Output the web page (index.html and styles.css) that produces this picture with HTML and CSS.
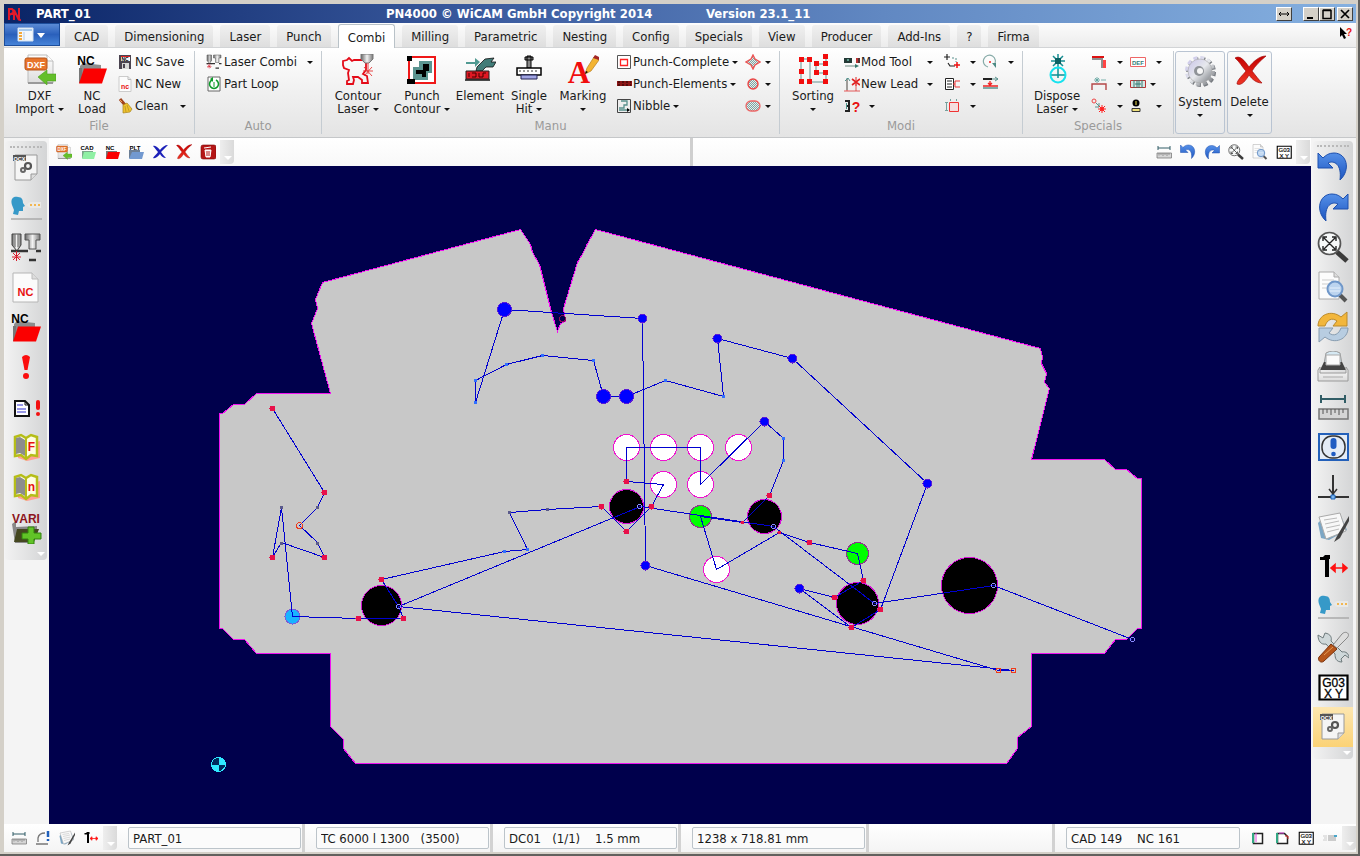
FILE: index.html
```html
<!DOCTYPE html>
<html lang="en">
<head>
<meta charset="utf-8">
<title>PN4000 - PART_01</title>
<link rel="stylesheet" href="styles.css">
</head>
<body>
<svg class="paints" aria-hidden="true">
  <defs>
    <linearGradient id="gBlue" x1="0" y1="0" x2="0" y2="1"><stop offset="0" stop-color="#5590e8"/><stop offset="1" stop-color="#1d55c0"/></linearGradient>
    <linearGradient id="gPage" x1="0" y1="0" x2="0" y2="1"><stop offset="0" stop-color="#ffffff"/><stop offset="1" stop-color="#dcdcdc"/></linearGradient>
    <linearGradient id="gSteel" x1="0" y1="0" x2="1" y2="0"><stop offset="0" stop-color="#666"/><stop offset=".5" stop-color="#f2f2f2"/><stop offset="1" stop-color="#777"/></linearGradient>
    <linearGradient id="gGear" x1="0" y1="0" x2="1" y2="1"><stop offset="0" stop-color="#c9c4ea"/><stop offset=".5" stop-color="#e6e8ec"/><stop offset="1" stop-color="#75797e"/></linearGradient>
    <linearGradient id="gRed" x1="0" y1="0" x2="0" y2="1"><stop offset="0" stop-color="#c40000"/><stop offset="1" stop-color="#ee3524"/></linearGradient>
    <pattern id="pHatch" width="2" height="2" patternUnits="userSpaceOnUse"><rect width="2" height="2" fill="#e4eeee"/><path d="M0 0h1v1h-1zM1 1h1v1h-1z" fill="#7fa3a0"/></pattern>
  </defs>
</svg>
<svg class="sprite" aria-hidden="true">
  <symbol id="dxf" viewBox="0 0 32 32"><path d="M4 1h19l6 6v22H4z" fill="url(#gPage)" stroke="#bbb"/><path d="M23 1v6h6" fill="#fff" stroke="#bbb"/><path d="M4 29h25" stroke="#999" stroke-width="2"/><rect x="1" y="4" width="22" height="12" rx="2" fill="#e8752c" stroke="#b5541a"/><text x="12" y="13.500" class="ic-t ic-white" font-size="9">DXF</text><path d="M14 23l9-7v4h9v7h-9v4z" fill="#64bf2a" stroke="#4a9e1c" stroke-width=".6"/></symbol>
  <symbol id="ncfolder" viewBox="0 0 32 32"><path d="M4 12l3-3 18 2v10H4z" fill="#8d8d8d"/><path d="M3 14h3v15H3z" fill="#777"/><path d="M8 14.500h23l-5 15H3z" fill="#fb0000"/><text x="10" y="11" class="ic-t" font-size="12">NC</text></symbol>
  <symbol id="cadfolder" viewBox="0 0 16 16"><path d="M2 7h11v7H2z" fill="#7aa98a"/><path d="M4 8h12l-2 7H2z" fill="#8ff0a4"/><text x="7" y="6" class="ic-t" font-size="6">CAD</text></symbol>
  <symbol id="pltfolder" viewBox="0 0 16 16"><path d="M1 6h11v8H1z" fill="#6c7e94"/><path d="M4 8h12l-2 7H1z" fill="#7299d0"/><text x="7" y="6" class="ic-t" font-size="6">PLT</text></symbol>
  <symbol id="ncfolder16" viewBox="0 0 16 16"><path d="M2 7h11v7H2z" fill="#777"/><path d="M4 8h12l-2 7H2z" fill="#fb0000"/><text x="6" y="6" class="ic-t" font-size="6">NC</text></symbol>
  <symbol id="save" viewBox="0 0 16 16"><path d="M2 1h12v14H2z" fill="#4b4450"/><path d="M4 2h9v5H4z" fill="#fff"/><path d="M5 9h7v6H5z" fill="#d8d8d8"/><path d="M6 10h2v4H6z" fill="#4b4450"/><path d="M4 2h9v1H4z" fill="#d22"/><text x="8" y="7" class="ic-t" font-size="5">NC</text></symbol>
  <symbol id="ncnew" viewBox="0 0 16 16"><path d="M2 .500h9l3 3v12H2z" fill="#fcfcfc" stroke="#ccc"/><path d="M11 .500v3h3" fill="none" stroke="#bbb"/><text x="8" y="13" class="ic-t ic-red" font-size="7">nc</text></symbol>
  <symbol id="broom" viewBox="0 0 16 16"><path d="M3 1l5 6" stroke="#a0431c" stroke-width="3"/><path d="M3 2l2 2" stroke="#f3a35a"/><path d="M6 7l4-2 5 6-2 3-7 1z" fill="#eec22e" stroke="#a7831a" stroke-width=".7"/><path d="M8 8l1 6M10 7l2 6" stroke="#a7831a" stroke-width=".6"/></symbol>
  <symbol id="heads" viewBox="0 0 32 32"><path d="M2 2h9v11l-4 6-5-6z" fill="url(#gSteel)" stroke="#444"/><path d="M5 2v13M8 2v13" stroke="#777"/><path d="M15 2h15v6h-4v9h-7V8h-4z" fill="url(#gSteel)" stroke="#555"/><path d="M1 19h17M26 19h5M19 28h7" stroke="#333" stroke-width="2.500"/><path d="M3 21l7 7M10 21l-7 7M6.500 19v10M2 25h9" stroke="#d81c2c"/></symbol>
  <symbol id="loop" viewBox="0 0 16 16"><path d="M2 1h12v14H2z" fill="#fff" stroke="#666"/><path d="M6 4a4.500 4.500 0 1 0 4 0" fill="none" stroke="#0b9a28" stroke-width="1.600"/><path d="M7 1v5L4 3z" fill="#0b9a28"/><path d="M8 6v5" stroke="#0b9a28"/></symbol>
  <symbol id="contour" viewBox="0 0 32 32"><path d="M1 7l4-1 2-2 3 3 2-1h9l3 3v7l-3 4 4 2 1 7h-6v-3l-4-3H11l1 3-1 4H5v-3l2-1-1-7 1-3-5-2-1-3z" fill="none" stroke="#e40b18" stroke-width="1.800"/><path d="M19 0h12v5l-4 4h-4l-4-4z" fill="url(#gSteel)" stroke="#777"/><path d="M26 9v11M22 13l8 9M30 13l-8 9M21 17h10" stroke="#e43434" stroke-width=".9"/></symbol>
  <symbol id="punchcontour" viewBox="0 0 32 32"><path d="M3 3h26v26H3z" fill="#fff" stroke="#ef1818" stroke-width="2"/><path d="M13 7h13v12h-4v7H7V13h6z" fill="#5b9591"/><path d="M17 10h6v7h-3v6h-4v-3h-6v-4h7z" fill="#000"/><path d="M1 2h5v5H1zM1 25h8v5H1z"/></symbol>
  <symbol id="element" viewBox="0 0 32 32"><path d="M2 8h9V4l5 4-5 5v-3H2z" fill="#519a92"/><path d="M13 13l8-8 9-1-3 4h5l-3 5h-7l-4 4h-6z" fill="#417c78" stroke="#111" stroke-width=".8"/><path d="M2 17h23v8H2z" fill="#e01823" stroke="#222"/><path d="M5 19v4M8 19h4v4H8M15 19v4h4M22 19h-3v4" fill="none" stroke="#400"/><path d="M1 26h25" stroke="#111" stroke-width="1.500"/></symbol>
  <symbol id="single" viewBox="0 0 32 32"><path d="M14 2h4v12h-4zM12 3h8v3h-8z" fill="#888" stroke="#000"/><path d="M4 14h24v7H4z" fill="#fff" stroke="#000" stroke-width="1.500"/><path d="M6 17h20" stroke="#333" stroke-dasharray="2 2"/><path d="M8 21h16v4H8z" fill="#a1a5e3" stroke="#222255"/></symbol>
  <symbol id="marking" viewBox="0 0 32 32"><text x="12" y="29" font-family="Liberation Serif, serif" font-size="31" font-weight="700" fill="#f10d0d" text-anchor="middle">A</text><path d="M18 20l2-6 7-11 5 3-8 11z" fill="#f3b432" stroke="#b87d20" stroke-width=".7"/><path d="M26 4l2-3 4 2v3z" fill="#a32626"/><path d="M18 20l1-3 2 1z"/></symbol>
  <symbol id="pcomplete" viewBox="0 0 16 16"><path d="M1.500 1.500h13v13h-13z" fill="#fff" stroke="#555"/><path d="M4.500 5.500h7v6h-7z" fill="#fff" stroke="#f22" stroke-width="1.300"/></symbol>
  <symbol id="pelements" viewBox="0 0 16 16"><path d="M1 5h15v5H1z" fill="#8a1515"/><path d="M2 6h13M2 9h13" stroke="#200" stroke-dasharray="2 2"/></symbol>
  <symbol id="nibble" viewBox="0 0 16 16"><path d="M1.500 1.500h13v13h-13z" fill="#eee" stroke="#444"/><path d="M5 3h6v4H8v3H3M3 12h10" fill="none" stroke="#58908c" stroke-width="1.300"/><path d="M11 10l3 2-3 2z"/></symbol>
  <symbol id="diamond" viewBox="0 0 16 16"><path d="M8 1l2 4 5 3-5 3-2 4-2-4-5-3 5-3z" fill="url(#pHatch)" stroke="#ed5555" stroke-width="1.400"/></symbol>
  <symbol id="circ" viewBox="0 0 16 16"><circle cx="8" cy="8" r="5" fill="url(#pHatch)" stroke="#ed4444" stroke-width="1.400"/></symbol>
  <symbol id="oval" viewBox="0 0 16 16"><rect x="1" y="3" width="14" height="10" rx="5" fill="url(#pHatch)" stroke="#ed6666" stroke-width="1.300"/></symbol>
  <symbol id="sorting" viewBox="0 0 32 32"><path d="M4 28V5h9v23M19 19V10h10V2M19 19h10v9H13" fill="none" stroke="#66918f"/><path d="M2 3h5v5H2zM10 3h5v5h-5zM2 15h5v5H2zM2 25h5v5H2zM10 25h5v5h-5zM26 0h5v5h-5zM26 7h5v5h-5zM17 7h5v5h-5zM17 16h5v5h-5zM26 16h5v5h-5zM26 25h5v5h-5z" fill="#f20d0d"/></symbol>
  <symbol id="modtool" viewBox="0 0 16 16"><path d="M0 4h8v5H0z" fill="#243a36"/><path d="M3 5h2v2H3z" fill="#5e9d8d"/><path d="M12 4h2v5h-2z" fill="#b33"/><path d="M14 4h2v5h-2z" fill="#533"/><path d="M1 12h11" stroke="#6d8b82"/><path d="M11 10l4 2-4 2z" fill="#38786c"/></symbol>
  <symbol id="newlead" viewBox="0 0 16 16"><path d="M0 15h16M3 3v12M12 5v10" stroke="#d33" stroke-width=".8"/><path d="M1 5l3-3 2 3M3 2v12" stroke="#53928c" fill="none"/><path d="M8 3l8 6M16 3l-8 6" stroke="#e12222" stroke-width="1.600"/><path d="M12 1v9" stroke="#e12222"/></symbol>
  <symbol id="helpbr" viewBox="0 0 16 16"><path d="M1 3h4v10H1M2 8h3" fill="none" stroke="#222" stroke-width="2"/><path d="M2 5h1v6H2z" fill="#4b938a"/><text x="12" y="14" class="ic-t ic-red" font-size="14">?</text></symbol>
  <symbol id="swap" viewBox="0 0 16 16"><path d="M0 3h6M3 0v6M4 9l2 3h5" stroke="#222" fill="none" stroke-width="1.200"/><path d="M8 4h2M12 4v4" stroke="#58908c" stroke-dasharray="2 1"/><path d="M10 11h6M13 8v6" stroke="#ef1111" stroke-width="1.500"/></symbol>
  <symbol id="listred" viewBox="0 0 16 16"><path d="M1.500 2.500h8v11h-8z" fill="#fff" stroke="#222"/><path d="M3 5h5M3 8h5M3 11h5" stroke="#222"/><path d="M16 5h-5v6h5M9 8h2" fill="none" stroke="#e33"/></symbol>
  <symbol id="rectred" viewBox="0 0 16 16"><path d="M5.500 4.500h9v9h-9z" fill="#f5dede" stroke="#ef3333"/><path d="M1 4.500h3M1 12.500h3M6.500 1v2M12.500 1v2M2.500 4v8" stroke="#76a09c" fill="none"/></symbol>
  <symbol id="rotate" viewBox="0 0 16 16"><path d="M6 13A6 6 0 1 1 12 11" fill="none" stroke="#87aba8" stroke-width="1.200"/><path d="M10 9h4v5z" fill="#4d8a84"/><circle cx="8" cy="8" r="1" fill="#e22"/></symbol>
  <symbol id="arrows" viewBox="0 0 16 16"><path d="M1 2h9v2H1z" fill="#222"/><path d="M10 3h6M13 1l3 2-3 2" fill="none" stroke="#58908c"/><path d="M8 5v4M6 7l2 2 2-2M1 10h15" fill="none" stroke="#e22" stroke-width="1.300"/><path d="M1 12h15" stroke="#58908c" stroke-width="1.500"/></symbol>
  <symbol id="dispose" viewBox="0 0 32 32"><path d="M17 0v14M10 7h14M12 2l10 10M22 2L12 12" stroke="#178f93" stroke-width="1.500"/><path d="M14 4h6v6h-6z" fill="#0b6163"/><path d="M17 14v10M10 21h14" stroke="#0a8f94" stroke-width="1.500"/><circle cx="17" cy="21" r="7.500" fill="none" stroke="#17e2ee" stroke-width="2"/></symbol>
  <symbol id="lshape" viewBox="0 0 16 16"><path d="M1 2h12v2H1z" fill="#d11"/><path d="M1 5h9M11 4v10" stroke="#222"/><path d="M12 6h3v8h-3z" fill="#f44"/></symbol>
  <symbol id="bracket" viewBox="0 0 16 16"><path d="M1 14V8h14v6" fill="none" stroke="#b44848" stroke-width="1.400"/><path d="M6 1v6M3 4h6M4 2l4 4M8 2L4 6M10 4h5" stroke="#58a09a" stroke-width=".8"/></symbol>
  <symbol id="burst" viewBox="0 0 16 16"><circle cx="3" cy="3" r="2" fill="none" stroke="#e44"/><path d="M5 5l4 4M8 5v4H4" stroke="#58908c" fill="none"/><path d="M11 7v8M7 11h8M8 8l6 6M14 8l-6 6" stroke="#f22"/><circle cx="11" cy="11" r="2" fill="#f22"/></symbol>
  <symbol id="def" viewBox="0 0 16 16"><path d="M.500 3.500h15v9H.500z" fill="#fff" stroke="#e66"/><text x="8" y="11" class="ic-t ic-teal" font-size="6">DEF</text></symbol>
  <symbol id="cells" viewBox="0 0 16 16"><path d="M.500 4.500h15v7H.500z" fill="#d8e8e6" stroke="#b33"/><path d="M4 4v8M7 4v8M9 4v8M12 4v8M5 8h6" stroke="#357a72"/></symbol>
  <symbol id="info" viewBox="0 0 16 16"><circle cx="6" cy="5" r="3.500"/><path d="M2 10.500h8v3H2z" fill="#eddf7a" stroke="#333"/><path d="M6 3v4" stroke="#efe04e"/></symbol>
  <symbol id="gear" viewBox="0 0 32 32"><circle cx="17" cy="17" r="13" fill="none" stroke="#777b80" stroke-width="4" stroke-dasharray="3.900 2.900"/><circle cx="16" cy="16" r="13" fill="none" stroke="url(#gGear)" stroke-width="4" stroke-dasharray="3.900 2.900"/><circle cx="16" cy="16" r="12" fill="url(#gGear)" stroke="#aaa" stroke-width=".6"/><circle cx="15" cy="16" r="5" fill="#8f9398"/><circle cx="16" cy="16" r="3" fill="#f7f7f7"/></symbol>
  <symbol id="del" viewBox="0 0 32 32"><path d="M1 3c5-3 9 2 14 9C19 7 25 1 32 1 26 6 21 11 18 16c4 5 7 9 10 12C22 28 18 24 15 20 12 25 8 31 3 29c0-4 6-9 9-13C8 12 6 7 1 3z" fill="url(#gRed)" stroke="#a30b0b" stroke-width=".7"/></symbol>
  <symbol id="delblue" viewBox="0 0 16 16"><path d="M1 2c3-1 5 2 7 4 2-3 5-5 8-5L9 8c2 3 4 5 5 6-3 0-5-2-6-4-2 2-4 5-7 4 1-2 4-4 5-6C4 6 3 4 1 2z" fill="#1b20b8"/></symbol>
  <symbol id="trash" viewBox="0 0 16 16"><rect x="1" y="1" width="15" height="14" rx="2" fill="#b51717" stroke="#7d0909" stroke-width=".6"/><path d="M5 6h6l-1 7H6zM4 4l7-1" fill="#fff" stroke="#fff"/><path d="M7 7v5M9 7v5" stroke="#b51717"/></symbol>
  <symbol id="undo" viewBox="0 0 32 32"><path d="M1 2v15h15l-5-5c6-3 14 1 12 17C34 19 30 2 17 2 12 2 9 4 6 7z" fill="url(#gBlue)" stroke="#1c4fae"/></symbol>
  <symbol id="redo" viewBox="0 0 32 32"><path d="M31 3v15H16l5-5C15 10 7 14 9 30-2 20 2 3 15 3c5 0 8 2 11 5z" fill="url(#gBlue)" stroke="#1c4fae"/></symbol>
  <symbol id="zoomfit" viewBox="0 0 32 32"><path d="M20 21l10 9" stroke="#3b3b3b" stroke-width="5"/><circle cx="12.500" cy="12.500" r="11" fill="#f6f8f8" stroke="#555" stroke-width="1.700"/><path d="M7 7l11 11M18 7L7 18M6 10V6h4M15 6h4v4M6 15v4h4M19 15v4h-4" fill="none" stroke="#222" stroke-width="1.400"/></symbol>
  <symbol id="preview" viewBox="0 0 32 32"><path d="M2 1h15l5 5v22H2z" fill="#fcfcfc" stroke="#aaa"/><path d="M17 1v5h5" fill="#ddd" stroke="#aaa"/><path d="M5 9h12M5 13h8M5 17h5" stroke="#ccc"/><path d="M23 24l6 6" stroke="#555" stroke-width="4"/><circle cx="18" cy="18" r="7.500" fill="#bcd4ef" stroke="#6f97c9" stroke-width="2"/><path d="M13 17h10M13 20h10" stroke="#e5f0fb"/></symbol>
  <symbol id="refresh" viewBox="0 0 32 32"><path d="M1 15C1 4 14-2 24 6l6-5v14H16l4-5c-5-4-10-1-12 5z" fill="#f2b63b" stroke="#bb8a2b"/><path d="M31 17C31 28 18 34 8 26l-6 5V17h14l-4 5c5 4 10 1 12-5z" fill="#b8cde1" stroke="#879cb0"/></symbol>
  <symbol id="printer" viewBox="0 0 32 32"><path d="M9 2q7-4 14 0l2 11H7z" fill="#d5e8f2" stroke="#999"/><path d="M7 11h18l4 8H3z" fill="#444"/><path d="M9 4h14v10H9z" fill="#fafafa" stroke="#aaa"/><path d="M3 16l-2 3v11h30V19l-2-3v6H3z" fill="url(#gPage)" stroke="#999"/><path d="M6 26h20" stroke="#aaa"/></symbol>
  <symbol id="ruler" viewBox="0 0 32 32"><path d="M4 4v8M28 4v8M4 8h24" stroke="#315d66" stroke-width="2"/><path d="M2 18h29v10H2z" fill="#d5d5d5" stroke="#777" stroke-width="1.500"/><path d="M6 18v5M10 18v4M14 18v6M18 18v4M22 18v6M26 18v4" stroke="#555"/></symbol>
  <symbol id="excl" viewBox="0 0 32 32"><rect x="2" y="3" width="29" height="26" fill="#e4ecf6" stroke="#2360ba" stroke-width="2"/><rect x="5" y="5" width="23" height="22" rx="10" fill="none" stroke="#333" stroke-width="1.500"/><rect x="13.500" y="7" width="6" height="11" rx="3" fill="#1f5cc2"/><circle cx="16.500" cy="23" r="2.300" fill="#1f5cc2"/></symbol>
  <symbol id="droppt" viewBox="0 0 32 32"><path d="M16 4v20M1 26h31" stroke="#333" stroke-width="2"/><path d="M12 18l4 5 4-5" fill="none" stroke="#333" stroke-width="1.500"/><path d="M14 24h4v4h-4z" fill="#7bb5ee" stroke="#1d65bb"/></symbol>
  <symbol id="notes" viewBox="0 0 32 32"><path d="M1 12l6-6 17-1 6 14-18 10-8-2z" fill="#7ba6c5"/><path d="M2 6l21-4 6 18-20 8z" fill="#f8f8f8" stroke="#aaa"/><path d="M7 9l13-2M8 13l14-3M9 17l14-3M10 21l12-3" stroke="#bbb"/><path d="M32 5L20 25l-3 6 6-4L33 8z" fill="#444"/></symbol>
  <symbol id="hammer" viewBox="0 0 32 32"><path d="M3 6h3l2-2h5v4h-1v18H8V9H3z"/><path d="M15 17h14M18 13.500l-4 3.500 4 3.500zM26 13.500l4 3.500-4 3.500z" fill="#f11" stroke="#f11" stroke-width="1.600"/></symbol>
  <symbol id="face" viewBox="0 0 32 32"><path d="M2 13C0 6 4 4 8 5c4 0 5 3 5 6l2 3-2 1v4H9l-1 4-5-1 1-4z" fill="#3699c8"/><path d="M16 13l4-3h11v6H20z" fill="#e9e9e7"/><path d="M20 12h2v2h-2zM24 12h2v2h-2zM28 12h2v2h-2z" fill="#f2b651"/><path d="M1 27h31" stroke="#aaa" stroke-width="1.500"/></symbol>
  <symbol id="tools" viewBox="0 0 32 32"><path d="M1 4l5 3 2-5c6 1 7 5 6 8l11 11c4-1 7 2 7 6l-4-3-4 4 1 3c-6 0-7-4-7-8L9 13C4 14 1 10 1 4z" fill="#cfd8da" stroke="#6e7a7c"/><path d="M16 14l9-11c4-4 9 0 5 4L20 17z" fill="#ddd" stroke="#888"/><path d="M14 13l6 5L7 30c-3 3-7-1-5-4z" fill="#b6561b" stroke="#7c330d"/><path d="M7 24l9-8" stroke="#e49b56"/></symbol>
  <symbol id="g03" viewBox="0 0 32 32"><path d="M2.500 4.500h28v24h-28z" fill="#fff" stroke="#000" stroke-width="2.200"/><text x="16.500" y="15.500" class="ic-mono" font-size="12">G03</text><text x="16.500" y="27" class="ic-mono" font-size="12">X Y</text></symbol>
  <symbol id="docx" viewBox="0 0 32 32"><path d="M5 3h22v19l-6 6H5z" fill="#f5f5f5" stroke="#999"/><path d="M27 22h-6v6" fill="#ddd" stroke="#999"/><rect x="3" y="3" width="13" height="6" fill="#555"/><text x="9.500" y="8.500" class="ic-t ic-white" font-size="5.500">OCX</text><circle cx="18" cy="14" r="3" fill="none" stroke="#555" stroke-width="2.200" /><circle cx="13" cy="18" r="2" fill="none" stroke="#666" stroke-width="2"/></symbol>
  <symbol id="ncdoc" viewBox="0 0 32 32"><path d="M3 1h19l6 6v23H3z" fill="#fbfbfb" stroke="#b5b5b5"/><path d="M22 1v6h6" fill="#ddd" stroke="#bbb"/><text x="15.500" y="24" class="ic-t ic-red" font-size="11">NC</text></symbol>
  <symbol id="redex" viewBox="0 0 32 32"><path d="M12 5q4-4 8 0l-2.500 13h-3z" fill="#fb0d0d"/><circle cx="16" cy="24" r="3" fill="#fb0d0d"/></symbol>
  <symbol id="docex" viewBox="0 0 32 32"><path d="M5 9h10l4 4v11H5z" fill="#fff" stroke="#111" stroke-width="2"/><path d="M15 9v4h4" fill="none" stroke="#111"/><path d="M7 13h6M7 17h9M7 20h9" stroke="#7676df" stroke-width="1.600"/><rect x="26" y="8" width="4" height="10" rx="2" fill="#f21010"/><circle cx="28" cy="22" r="2" fill="#f21010"/></symbol>
  <symbol id="book" viewBox="0 0 32 32"><path d="M8 9l10 3 12-3v17l-13 3-9-3z" fill="#ffa196"/><path d="M5 5l6-2 5 3 5-3 6 2v19l-6-1-5 4-5-4-6 1z" fill="#fffde1" stroke="#b5bd18" stroke-width="2.500"/><path d="M6 6l4-1 5 3v16l-5-3-4 1z" fill="#8d8d8d"/><path d="M16 6v20" stroke="#b5bd18" stroke-width="2"/></symbol>
  <symbol id="bookf" viewBox="0 0 32 32"><use href="#book"/><text x="21.500" y="19" class="ic-t ic-red" font-size="12">F</text></symbol>
  <symbol id="bookn" viewBox="0 0 32 32"><use href="#book"/><text x="21.500" y="19" class="ic-t ic-red" font-size="12">n</text></symbol>
  <symbol id="vari" viewBox="0 0 32 32"><path d="M2 12l4-3v6l21-1v8l-4 9H5z" fill="#888"/><path d="M7 17h22l-5 13H4z" fill="#444720"/><text x="16" y="11" class="ic-dark" font-size="12">VARI</text><path d="M18 15h6v6h7v6h-7v5h-6v-5h-6v-6h6z" fill="#61c327" stroke="#33820e"/></symbol>
  <symbol id="curve" viewBox="0 0 16 16"><path d="M1 14h12M3 12V8q1-5 7-5" fill="none" stroke="#777" stroke-width="1.300"/><path d="M13 1v6M13 9v2" stroke="#2060bb" stroke-width="2.500"/></symbol>
  <symbol id="sheet1" viewBox="0 0 16 16"><path d="M3.500 3.500h9v10h-9z" fill="#fff" stroke="#222" stroke-width="1.500"/><path d="M6 3v9" stroke="#e04ae0"/><path d="M3 3v10" stroke="#32a884" stroke-width="2"/></symbol>
  <symbol id="sheet2" viewBox="0 0 16 16"><path d="M3.500 3.500h7l3 3v7h-10z" fill="#fff" stroke="#222" stroke-width="1.500"/><path d="M5 3h5" stroke="#e04ae0"/><path d="M3 3v10" stroke="#32a884" stroke-width="2"/><path d="M11 6h3v3" fill="none" stroke="#d33"/></symbol>
  <symbol id="mail" viewBox="0 0 16 16"><path d="M1 6h4M2 8h3M1 10h4" stroke="#ccc"/><path d="M6 5h8v6H6z" fill="#ccc"/><path d="M12 5h3v2h-3z" fill="#4aa6c9"/></symbol>
</svg>

<div class="window">
  <header class="titlebar">
    <div class="title-part">
      <svg class="logo" viewBox="0 0 14 14" aria-hidden="true"><path d="M2 13V2h3q2 1 1 4L2 8M7 13V3l5 10V1M11 11l3 3" fill="none" stroke="#e01a2a" stroke-width="2"/></svg>
      <span>PART_01</span>
    </div>
    <span>PN4000 © WiCAM GmbH Copyright 2014</span>
    <span>Version 23.1_11</span>
    <div class="win-buttons">
      <button class="wb wb-arrow" aria-label="Resize"><svg viewBox="0 0 14 12"><path d="M2 6h10M4 4L2 6l2 2M10 4l2 2-2 2" fill="none" stroke="#000"/></svg></button>
      <button class="wb" aria-label="Minimize"><svg viewBox="0 0 14 12"><path d="M3 9h6v2H3z"/></svg></button>
      <button class="wb" aria-label="Maximize"><svg viewBox="0 0 14 12"><path d="M3 2.500h8v8H3zM3 2h8" fill="none" stroke="#000" stroke-width="1.500"/></svg></button>
      <button class="wb wb-close" aria-label="Close"><svg viewBox="0 0 14 12"><path d="M3 2l8 8M11 2l-8 8" stroke="#000" stroke-width="1.700"/></svg></button>
    </div>
  </header>

  <nav class="tabs" aria-label="Ribbon tabs">
    <button class="app-btn" aria-label="Application menu"><svg viewBox="0 0 30 18"><path d="M1 2h15v13H1z" fill="#f3f7fb" stroke="#d3e1f1"/><path d="M2 3h13v2H2z" fill="#a7c9ec"/><path d="M2 6h3v2H2zM2 9h3v2H2zM2 12h3v2H2z" fill="#f4a93a"/><path d="M7 6v8" stroke="#b5cce6"/><path d="M20 7h8l-4 5z" fill="#fff"/></svg></button>
    <button class="tab">CAD</button><button class="tab">Dimensioning</button><button class="tab">Laser</button><button class="tab">Punch</button><button class="tab active">Combi</button><button class="tab">Milling</button><button class="tab">Parametric</button><button class="tab">Nesting</button><button class="tab">Config</button><button class="tab">Specials</button><button class="tab">View</button><button class="tab">Producer</button><button class="tab">Add-Ins</button><button class="tab">?</button><button class="tab">Firma</button>
    <button class="help" aria-label="Context help"><svg viewBox="0 0 14 14"><path d="M1 1v10l2-2 2 4 2-1-2-4h3z"/><text x="10" y="10" class="ic-t ic-red" font-size="10">?</text></svg></button>
  </nav>

  <section class="ribbon" aria-label="Combi">
    <div class="group g-file">
      <div class="body">
        <button class="big"><svg><use href="#dxf"/></svg><span>DXF<br>Import <i class="caret"></i></span></button>
        <button class="big"><svg><use href="#ncfolder"/></svg><span>NC<br>Load</span></button>
        <div class="stack">
          <button class="sm"><svg><use href="#save"/></svg>NC Save</button>
          <button class="sm"><svg><use href="#ncnew"/></svg>NC New</button>
          <button class="sm spread"><svg><use href="#broom"/></svg>Clean<i class="caret"></i></button>
        </div>
      </div>
      <h2>File</h2>
    </div>
    <div class="group g-auto">
      <div class="body">
        <div class="stack">
          <button class="sm spread"><svg><use href="#heads"/></svg>Laser Combi<i class="caret"></i></button>
          <button class="sm"><svg><use href="#loop"/></svg>Part Loop</button>
        </div>
      </div>
      <h2>Auto</h2>
    </div>
    <div class="group g-manu">
      <div class="body">
        <button class="big"><svg><use href="#contour"/></svg><span>Contour<br>Laser <i class="caret"></i></span></button>
        <button class="big"><svg><use href="#punchcontour"/></svg><span>Punch<br>Contour <i class="caret"></i></span></button>
        <button class="big"><svg><use href="#element"/></svg><span>Element</span></button>
        <button class="big"><svg><use href="#single"/></svg><span>Single<br>Hit <i class="caret"></i></span></button>
        <button class="big"><svg><use href="#marking"/></svg><span>Marking<br><i class="caret"></i></span></button>
        <div class="stack tight">
          <button class="sm"><svg><use href="#pcomplete"/></svg>Punch-Complete<i class="caret"></i></button>
          <button class="sm"><svg><use href="#pelements"/></svg>Punch-Elements<i class="caret"></i></button>
          <button class="sm"><svg><use href="#nibble"/></svg>Nibble<i class="caret"></i></button>
        </div>
        <div class="stack">
          <button class="sm" aria-label="Square tool"><svg><use href="#diamond"/></svg><i class="caret"></i></button>
          <button class="sm" aria-label="Round tool"><svg><use href="#circ"/></svg><i class="caret"></i></button>
          <button class="sm" aria-label="Oblong tool"><svg><use href="#oval"/></svg><i class="caret"></i></button>
        </div>
      </div>
      <h2>Manu</h2>
    </div>
    <div class="group g-modi">
      <div class="body">
        <button class="big"><svg><use href="#sorting"/></svg><span>Sorting<br><i class="caret"></i></span></button>
        <div class="stack tight">
          <button class="sm spread"><svg><use href="#modtool"/></svg>Mod Tool<i class="caret"></i></button>
          <button class="sm spread"><svg><use href="#newlead"/></svg>New Lead<i class="caret"></i></button>
          <button class="sm wide" aria-label="Query"><svg><use href="#helpbr"/></svg><i class="caret"></i></button>
        </div>
        <div class="stack">
          <button class="sm wide" aria-label="Swap"><svg><use href="#swap"/></svg><i class="caret"></i></button>
          <button class="sm wide" aria-label="List"><svg><use href="#listred"/></svg><i class="caret"></i></button>
          <button class="sm wide" aria-label="Frame"><svg><use href="#rectred"/></svg><i class="caret"></i></button>
        </div>
        <div class="stack">
          <button class="sm wide" aria-label="Rotate"><svg><use href="#rotate"/></svg><i class="caret"></i></button>
          <button class="sm" aria-label="Move"><svg><use href="#arrows"/></svg></button>
        </div>
      </div>
      <h2>Modi</h2>
    </div>
    <div class="group g-spec">
      <div class="body">
        <button class="big"><svg><use href="#dispose"/></svg><span>Dispose<br>Laser <i class="caret"></i></span></button>
        <div class="stack">
          <button class="sm wide" aria-label="Corner"><svg><use href="#lshape"/></svg><i class="caret"></i></button>
          <button class="sm wide" aria-label="Lead point"><svg><use href="#bracket"/></svg><i class="caret"></i></button>
          <button class="sm wide" aria-label="Burst"><svg><use href="#burst"/></svg><i class="caret"></i></button>
        </div>
        <div class="stack">
          <button class="sm wide" aria-label="Define"><svg><use href="#def"/></svg><i class="caret"></i></button>
          <button class="sm" aria-label="Cells"><svg><use href="#cells"/></svg><i class="caret"></i></button>
          <button class="sm wide" aria-label="Info"><svg><use href="#info"/></svg><i class="caret"></i></button>
        </div>
      </div>
      <h2>Specials</h2>
    </div>
    <button class="big boxed box-sys"><svg><use href="#gear"/></svg><span>System<br><i class="caret"></i></span></button>
    <button class="big boxed"><svg><use href="#del"/></svg><span>Delete<br><i class="caret"></i></span></button>
  </section>

  <main class="work">
    <aside class="side left" aria-label="Left tools">
      <button aria-label="OCX"><svg><use href="#docx"/></svg></button>
      <button aria-label="User"><svg><use href="#face"/></svg></button>
      <button aria-label="Laser combi"><svg><use href="#heads"/></svg></button>
      <button aria-label="NC new"><svg><use href="#ncdoc"/></svg></button>
      <button aria-label="NC load"><svg><use href="#ncfolder"/></svg></button>
      <button aria-label="Warning"><svg><use href="#redex"/></svg></button>
      <button aria-label="Check document"><svg><use href="#docex"/></svg></button>
      <button aria-label="Catalog F"><svg><use href="#bookf"/></svg></button>
      <button aria-label="Catalog n"><svg><use href="#bookn"/></svg></button>
      <button aria-label="Variant"><svg><use href="#vari"/></svg></button>
    </aside>
    <div class="center">
      <div class="quick">
        <div class="quick-half quick-left">
          <button aria-label="DXF import"><svg><use href="#dxf"/></svg></button>
          <button aria-label="CAD load"><svg><use href="#cadfolder"/></svg></button>
          <button aria-label="NC load"><svg><use href="#ncfolder16"/></svg></button>
          <button aria-label="PLT load"><svg><use href="#pltfolder"/></svg></button>
          <button aria-label="Delete CAD"><svg><use href="#delblue"/></svg></button>
          <button aria-label="Delete NC"><svg><use href="#del"/></svg></button>
          <button aria-label="Trash"><svg><use href="#trash"/></svg></button>
          <span class="grip"></span>
        </div>
        <div class="quick-half quick-right">
          <button aria-label="Measure"><svg><use href="#ruler"/></svg></button>
          <button aria-label="Undo"><svg><use href="#undo"/></svg></button>
          <button aria-label="Redo"><svg><use href="#redo"/></svg></button>
          <button aria-label="Zoom fit"><svg><use href="#zoomfit"/></svg></button>
          <button aria-label="Preview"><svg><use href="#preview"/></svg></button>
          <button aria-label="G03"><svg><use href="#g03"/></svg></button>
          <span class="grip"></span>
        </div>
      </div>
      <div class="canvas">
        <svg viewBox="48.500 165.500 1262 658" role="img" aria-label="Part drawing with laser and punch path">
          <path class="part" d="M520 229L530 244L532 252L539 264L551 312L557 331L560 323L565 321L564 314L563 308L577 262L583 252L586 245L595 229L1040 348L1042 356L1041 363L1046 373L1044 382L1049 388L1031 459H1104L1115 469H1126L1137 478H1141V628H1137L1126 639H1115L1104 653H1031V726L1017 737V748L1006 763H355L343 748V739L330 726V653H256L244 639H233L222 628H219V413H222L233 404H244L256 393H330L311 323L317 308L315 299L322 282Z"/>
          <g class="hole-black"><circle cx="626" cy="506" r="17"/><circle cx="764" cy="516" r="17"/><circle cx="857" cy="603" r="21"/><circle cx="969" cy="585" r="28"/><circle cx="381" cy="605" r="20"/></g>
          <circle class="nick" cx="562" cy="318" r="3"/>
          <g class="hole-white"><circle cx="626" cy="447" r="13"/><circle cx="663" cy="447" r="13"/><circle cx="700" cy="447" r="13"/><circle cx="738" cy="447" r="13"/><circle cx="663" cy="484" r="13"/><circle cx="700" cy="484" r="13"/><circle cx="716" cy="569" r="13"/></g>
          <g class="hole-green"><circle cx="700" cy="516" r="11"/><circle cx="857" cy="553" r="11"/></g>
          <circle class="hole-cyan" cx="292" cy="616" r="7.500"/>
          <g class="route">
            <path d="M272 408L324 492L317 507L299 525L317 542L324 557L281 542L272 557L281 507L292 616L358 618H403L398 606L381 579L504 551L527 549L509 512L547 509L601 506L626 531L651 506L663 484L626 481V447H700V484L764 421L783 438V460L769 495L742 522L700 516L716 569L779 532L809 542L857 553L863 580L834 597L799 588L851 627L880 609L927 483L792 358L717 338L723 396L665 380L626 396H603L593 360L542 355L506 364L475 380V402L504 309L642 318L645 565L998 670H1013L398 606L640 506L773 526L874 603L993 585L1132 639"/>
          </g>
          <g class="hit"><circle cx="504" cy="309" r="7"/><circle cx="603" cy="396" r="7"/><circle cx="626" cy="396" r="7"/><circle cx="642" cy="318" r="4.500"/><circle cx="717" cy="338" r="4.500"/><circle cx="792" cy="358" r="4.500"/><circle cx="927" cy="483" r="4.500"/><circle cx="764" cy="421" r="4.500"/><circle cx="645" cy="565" r="4.500"/><circle cx="799" cy="588" r="4.500"/></g>
          <g class="dot"><circle cx="272" cy="408" r="3"/><circle cx="324" cy="492" r="3"/><circle cx="324" cy="557" r="3"/><circle cx="272" cy="557" r="3"/><circle cx="381" cy="579" r="3"/><circle cx="358" cy="618" r="3"/><circle cx="403" cy="618" r="3"/><circle cx="601" cy="506" r="3"/><circle cx="626" cy="481" r="3"/><circle cx="651" cy="506" r="3"/><circle cx="626" cy="531" r="3"/><circle cx="769" cy="495" r="3"/><circle cx="742" cy="522" r="2"/><circle cx="779" cy="532" r="2"/><circle cx="809" cy="542" r="3"/><circle cx="863" cy="580" r="3"/><circle cx="834" cy="597" r="3"/><circle cx="851" cy="627" r="3"/><circle cx="880" cy="609" r="3"/></g>
          <g class="tick"><circle cx="475" cy="380" r="1.500"/><circle cx="475" cy="402" r="1.500"/><circle cx="506" cy="364" r="1.500"/><circle cx="542" cy="355" r="1.500"/><circle cx="593" cy="360" r="1.500"/><circle cx="665" cy="380" r="1.500"/><circle cx="723" cy="396" r="1.500"/><circle cx="783" cy="438" r="1.500"/><circle cx="783" cy="460" r="1.500"/><circle cx="527" cy="549" r="1.500"/><circle cx="504" cy="551" r="1.500"/></g>
          <g class="node"><circle cx="398" cy="606" r="2"/><circle cx="639" cy="506" r="2"/><circle cx="773" cy="526" r="2"/><circle cx="874" cy="603" r="2"/><circle cx="993" cy="585" r="2"/><circle cx="1132" cy="639" r="2"/></g>
          <g class="grey"><circle cx="281" cy="507" r="1.500"/><circle cx="317" cy="507" r="1.500"/><circle cx="281" cy="543" r="1.500"/><circle cx="317" cy="543" r="1.500"/><circle cx="509" cy="512" r="1.500"/><circle cx="547" cy="509" r="1.500"/></g>
          <g class="ring"><circle cx="299" cy="525" r="3"/><circle cx="998" cy="670" r="2.500"/><circle cx="1013" cy="670" r="2.500"/></g>
          <g class="origin"><circle cx="218" cy="764" r="7"/><path d="M218 764V757A7 7 0 0 1 225 764ZM218 764V771A7 7 0 0 1 211 764Z"/></g>
        </svg>
      </div>
    </div>
    <aside class="side right" aria-label="Right tools">
      <button aria-label="Undo"><svg><use href="#undo"/></svg></button>
      <button aria-label="Redo"><svg><use href="#redo"/></svg></button>
      <button aria-label="Zoom fit"><svg><use href="#zoomfit"/></svg></button>
      <button aria-label="Preview"><svg><use href="#preview"/></svg></button>
      <button aria-label="Refresh"><svg><use href="#refresh"/></svg></button>
      <button aria-label="Print"><svg><use href="#printer"/></svg></button>
      <button aria-label="Measure"><svg><use href="#ruler"/></svg></button>
      <button aria-label="Notice"><svg><use href="#excl"/></svg></button>
      <button aria-label="Set point"><svg><use href="#droppt"/></svg></button>
      <button aria-label="Notes"><svg><use href="#notes"/></svg></button>
      <button aria-label="Tool move"><svg><use href="#hammer"/></svg></button>
      <button aria-label="User"><svg><use href="#face"/></svg></button>
      <button aria-label="Settings"><svg><use href="#tools"/></svg></button>
      <button aria-label="G03"><svg><use href="#g03"/></svg></button>
      <button class="selected" aria-label="OCX"><svg><use href="#docx"/></svg></button>
    </aside>
  </main>

  <footer class="status">
    <div class="status-icons">
      <button aria-label="Measure"><svg><use href="#ruler"/></svg></button>
      <button aria-label="Curve"><svg><use href="#curve"/></svg></button>
      <button aria-label="Notes"><svg><use href="#notes"/></svg></button>
      <button aria-label="Tool move"><svg><use href="#hammer"/></svg></button>
      <span class="grip"></span>
    </div>
    <div class="seg"><input readonly aria-label="Part" value="PART_01"></div>
    <div class="seg"><input readonly aria-label="Machine" value="TC 6000 l 1300&nbsp;&nbsp; (3500)"></div>
    <div class="seg"><input readonly aria-label="Material" value="DC01&nbsp;&nbsp; (1/1)&nbsp;&nbsp;&nbsp; 1.5 mm"></div>
    <div class="seg"><input readonly aria-label="Size" value="1238 x 718.81 mm"></div>
    <div class="seg seg-fill"></div>
    <div class="seg seg-last"><input readonly aria-label="Counts" value="CAD 149&nbsp;&nbsp;&nbsp; NC 161"></div>
    <div class="status-icons">
      <button aria-label="Sheet"><svg><use href="#sheet1"/></svg></button>
      <button aria-label="Sheet edit"><svg><use href="#sheet2"/></svg></button>
      <button aria-label="G03"><svg><use href="#g03"/></svg></button>
      <button aria-label="Mail"><svg><use href="#mail"/></svg></button>
      <span class="grip"></span>
    </div>
  </footer>
</div>
</body>
</html>
```

FILE: styles.css
```css
* { box-sizing: border-box; }
html, body { height: 100%; }
body {
  margin: 0;
  border: solid #62615e;
  border-width: 0 2px 2px 0;
  background: #d4d0c8;
  color: #1a1a1a;
  font: 13px/16px "DejaVu Sans Condensed", "DejaVu Sans", sans-serif;
}
button, input { font: inherit; color: inherit; }
button { border: 0; padding: 0; background: none; }
.paints { position: absolute; width: 0; height: 0; }
.sprite { display: none; }

.ic-t { font-family: "Liberation Sans", Arial, sans-serif; font-weight: 700; text-anchor: middle; }
.ic-white { fill: #fff; }
.ic-red { fill: #e81010; }
.ic-teal { fill: #35807a; }
.ic-mono { font-family: "Liberation Sans", Arial, sans-serif; text-anchor: middle; stroke: #000; stroke-width: .3px; }
.ic-dark { font-family: "Liberation Sans", Arial, sans-serif; text-anchor: middle; font-weight: 700; fill: #8c1420; }

.window {
  display: flex;
  flex-direction: column;
  height: 100%;
  min-height: 838px;
  border: solid #d4d0c8;
  border-width: 4px 2px 2px 4px;
  background: #f4f4f4;
}

/* Title bar */
.titlebar {
  display: grid;
  grid-template-columns: 382px 320px 1fr auto;
  align-items: center;
  height: 19px;
  flex: none;
  background: linear-gradient(90deg, #0a2466, #3a5a9e 35%, #6188c2 65%, #85b0e0);
  color: #fff;
  font-weight: 700;
}
.title-part { display: flex; align-items: center; gap: 15px; padding-left: 3px; }
.logo { width: 14px; height: 14px; }
.win-buttons { display: flex; padding-right: 3px; }
.wb {
  width: 16px;
  height: 14px;
  background: #d4d0c8;
  border: 1px solid;
  border-color: #fff #404040 #404040 #fff;
  line-height: 0;
}
.wb svg { width: 14px; height: 12px; }
.wb-arrow { margin-right: 11px; }
.wb-close { margin-left: 2px; }

/* Tabs */
.tabs {
  display: flex;
  align-items: flex-end;
  gap: 7px;
  height: 25px;
  flex: none;
  background: linear-gradient(#fcfcfc, #ececec);
  border-bottom: 1px solid #d2d4d6;
}
.app-btn {
  width: 56px;
  height: 23px;
  align-self: flex-start;
  margin-right: -2px;
  border: 1px solid #1d4e9c;
  background: linear-gradient(#5b8bd6, #2a60bb 50%, #4683d8);
  line-height: 0;
}
.app-btn svg { width: 30px; height: 18px; }
.tab {
  height: 22px;
  padding: 2px 9px 0;
  background: linear-gradient(#f0f0f0, #dedede);
  border-radius: 3px 3px 0 0;
}
.tab.active {
  height: 24px;
  margin-bottom: -1px;
  border: 1px solid #b9c2c8;
  border-bottom: 0;
  background: #fff;
}
.help { margin-left: auto; padding: 0 3px 3px 0; }
.help svg { width: 14px; height: 14px; }

/* Ribbon */
.ribbon {
  display: flex;
  flex: none;
  height: 90px;
  padding: 3px 0;
  background: linear-gradient(#fff, #f0f0f0 50%, #e4e4e4);
  border-bottom: 1px solid #c5c7c9;
}
.group {
  display: flex;
  flex-direction: column;
  justify-content: space-between;
  flex: none;
  border-right: 1px solid #c5ccd2;
}
.body { display: grid; column-gap: 0; }
.group h2 {
  margin: 0;
  color: #9a9a9a;
  font-size: 13px;
  font-weight: 400;
  text-align: center;
}
.g-file { width: 191px; }
.g-file .body { grid-template-columns: 65px 40px 1fr; padding-left: 3px; }
.g-file .stack { padding: 0 8px 0 5px; }
.g-auto { width: 127px; }
.g-auto .body { padding: 0 8px 0 11px; }
.g-manu { width: 458px; }
.g-manu .body { grid-template-columns: 62px 66px 50px 48px 60px 132px 1fr; padding-left: 5px; }
.g-manu .tight { padding-left: 3px; }
.g-modi { width: 243px; }
.g-modi .body { grid-template-columns: 62px 100px 38px 1fr; padding-left: 2px; }
.g-spec { width: 151px; }
.g-spec .body { grid-template-columns: 68px 39px 1fr; }

.big {
  display: flex;
  flex-direction: column;
  align-items: center;
  gap: 3px;
  padding-top: 3px;
  line-height: 13px;
  text-align: center;
  white-space: nowrap;
}
.big svg { width: 32px; height: 32px; flex: none; }
.caret {
  display: inline-block;
  flex: none;
  width: 5px;
  height: 3px;
  border: solid transparent;
  border-width: 3px 3px 0;
  border-top-color: #111;
  vertical-align: middle;
}
.stack { display: grid; grid-auto-rows: 22px; align-content: start; }
.sm { display: flex; align-items: center; gap: 2px; white-space: nowrap; }
.sm svg { width: 16px; height: 16px; flex: none; }
.tight .sm { gap: 1px; }
.sm .caret { margin-left: 2px; }
.wide .caret { margin-left: 8px; }
.spread .caret { margin-left: auto; }
.tight .spread { padding-right: 11px; }
.boxed {
  flex: none;
  width: 50px;
  gap: 8px;
  border: 1px solid #b9c4d2;
  border-radius: 3px;
  background: linear-gradient(#fafafa, #e8e9ea);
}
.box-sys { margin: 0 2px 0 1px; }
.boxed + .boxed { width: 45px; }

/* Work area */
.work { display: flex; flex: 1; min-height: 0; }
.side {
  position: relative;
  display: flex;
  flex-direction: column;
  flex: none;
  align-self: flex-start;
  margin-top: 3px;
  padding: 7px 0 12px;
  border-radius: 4px;
  background: linear-gradient(90deg, #f2f2f2, #d4d5d6);
}
.side::before {
  content: "";
  width: 32px;
  margin: -2px auto 0;
  border-top: 2px dotted #b8b8b8;
}
.side::after, .grip::after {
  content: "";
  position: absolute;
  right: 2px;
  bottom: 4px;
  border: solid transparent;
  border-width: 4px 4px 0;
  border-top-color: #fff;
}
.side button { display: grid; place-items: center; height: 40px; }
.side svg { width: 32px; height: 32px; }
.left { width: 42px; margin-right: 2px; margin-left: 1px; }
.right { width: 40px; margin-right: 3px; margin-left: 2px; padding-top: 6px; }
.selected { background: linear-gradient(#fde6b0, #fbd276); }
.center { display: flex; flex-direction: column; flex: 1; min-width: 0; }
.quick { display: flex; flex: none; height: 28px; background: linear-gradient(#fff, #f8f8f8); }
.quick-half { display: flex; align-items: center; }
.quick-left { width: 51%; padding-left: 3px; border-right: 3px solid #cfcfcf; }
.quick-right { flex: 1; justify-content: flex-end; padding-right: 1px; }
.quick button, .status button { display: grid; place-items: center; width: 24px; height: 24px; }
.quick svg, .status svg { width: 16px; height: 16px; }
.grip {
  position: relative;
  width: 14px;
  height: 24px;
  border-radius: 0 0 4px 0;
  background: linear-gradient(90deg, #eee, #dadada);
}
.canvas { flex: 1; min-height: 0; background: #00004c; }
.canvas svg { display: block; width: 100%; height: 100%; shape-rendering: crispEdges; }
.part { fill: #c8c8c8; stroke: #f012f0; stroke-width: 1; }
.hole-black { fill: #000; stroke: #d412d4; }
.nick { fill: #00004c; stroke: #8a0a5a; }
.hole-white { fill: #fff; stroke: #f012d0; }
.hole-green { fill: #00ff00; stroke: #8a3a8a; }
.hole-cyan { fill: #18b4ff; stroke: #7a5ad8; }
.hit { fill: #0000ff; stroke: #5a1ad8; }
.dot { fill: #e8104a; }
.route { fill: none; stroke: #0000d0; stroke-width: 1; }
.tick { fill: #3070ff; }
.node { fill: none; stroke: #8a8aff; }
.grey { fill: #5a5a8a; }
.ring { fill: none; stroke: #f03a1a; }
.origin circle { fill: #002a5c; stroke: #2fe8ff; }
.origin path { fill: #2fe8ff; }

/* Status bar */
.status {
  display: flex;
  flex: none;
  height: 28px;
  background: linear-gradient(#fff, #f4f4f4);
}
.status-icons { display: flex; align-items: center; padding: 0 0 0 3px; }
.seg {
  flex: 0 0 188px;
  display: flex;
  align-items: center;
  padding: 0 1px 0 11px;
  border-right: 3px solid #d2d2d2;
}
.seg input {
  width: 100%;
  height: 22px;
  padding: 0 4px;
  border: 1px solid #bcc4ca;
  border-radius: 2px;
  background: #fbfbfb;
}
.seg-fill { flex: 1; }
.seg-last { border: 0; padding-right: 3px; }
```
